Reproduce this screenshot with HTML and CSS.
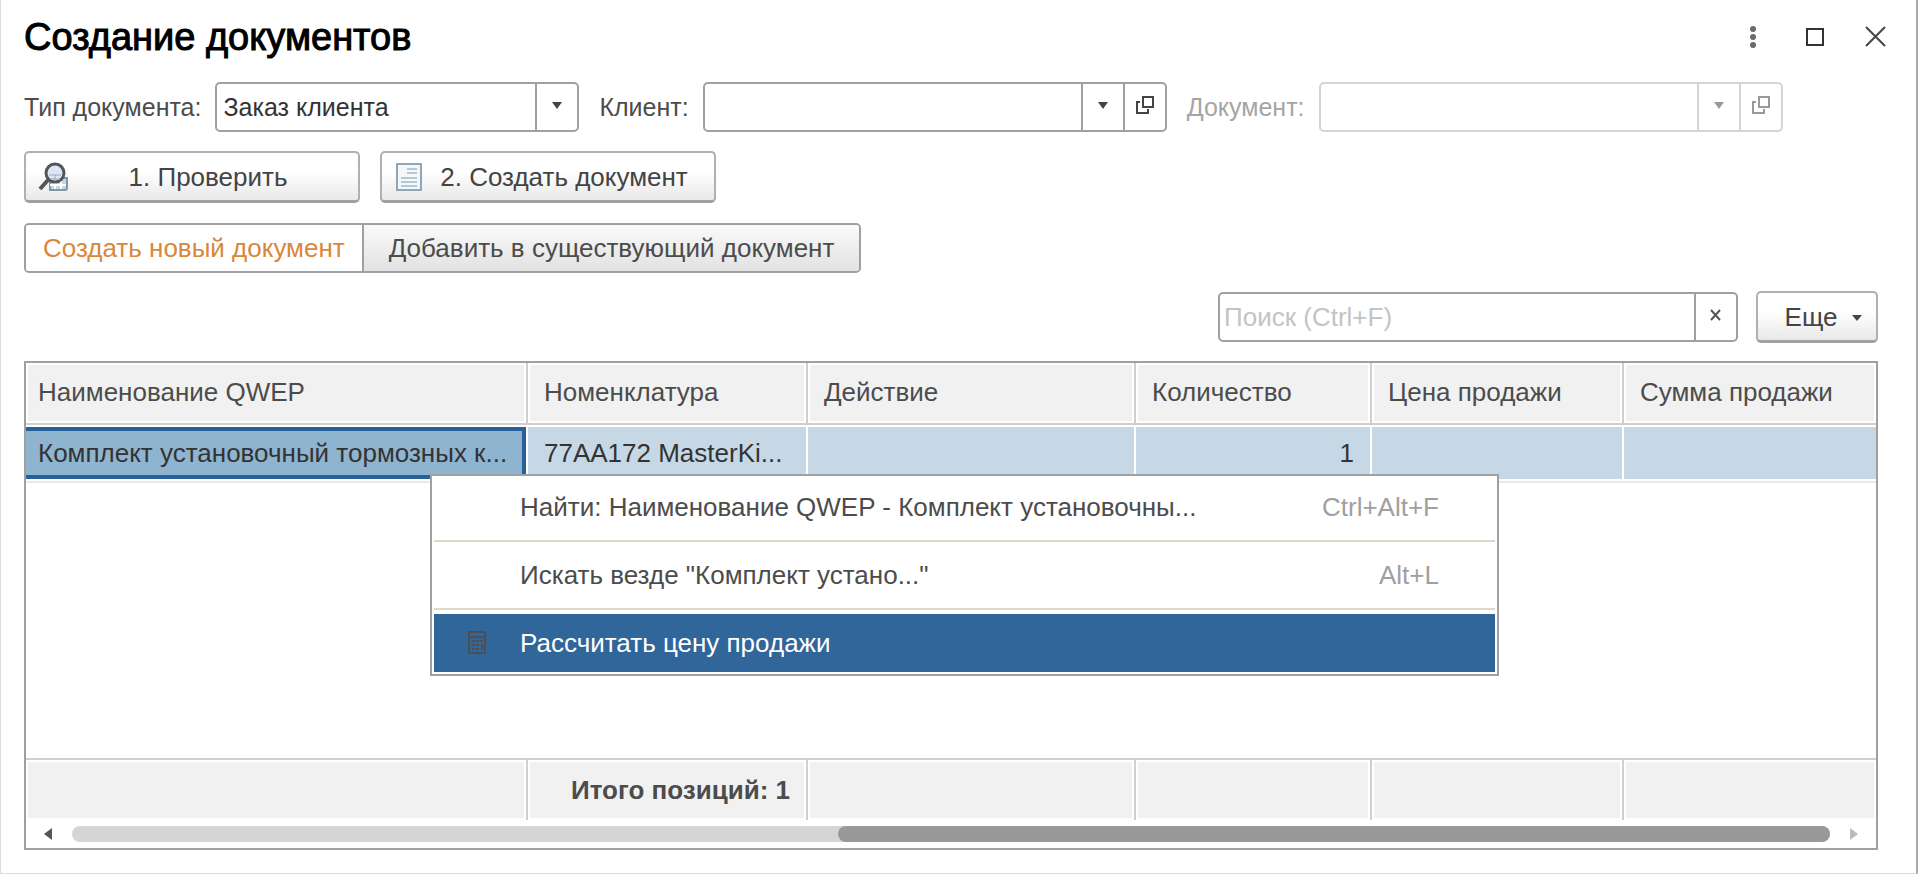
FILE: index.html
```
<!DOCTYPE html>
<html lang="ru">
<head>
<meta charset="utf-8">
<title>Создание документов</title>
<link rel="stylesheet" href="styles.css">
</head>
<body>
<main class="window">
  <header class="titlebar">
    <h1 class="title">Создание документов</h1>
    <div class="window-buttons">
      <button class="win-btn" aria-label="Меню"><svg width="24" height="24" viewBox="0 0 24 24"><g fill="#6a6a6a"><circle cx="13" cy="4" r="3"/><circle cx="13" cy="12" r="3"/><circle cx="13" cy="20" r="3"/></g></svg></button>
      <button class="win-btn" aria-label="Развернуть"><svg width="24" height="24" viewBox="0 0 24 24"><rect x="5" y="4" width="16" height="16" fill="none" stroke="#333" stroke-width="2"/></svg></button>
      <button class="win-btn" aria-label="Закрыть"><svg width="24" height="24" viewBox="0 0 24 24"><path d="M2 2L21 21M21 2L2 21" stroke="#444" stroke-width="2"/></svg></button>
    </div>
  </header>

  <div class="fields">
    <div class="field">
      <label for="type">Тип документа:</label>
      <div class="box box-type">
        <select id="type"><option>Заказ клиента</option></select>
        <span class="box-btn box-arrow"><svg width="10" height="7" viewBox="0 0 10 7"><path d="M0 0H10L5 7Z" fill="#444"/></svg></span>
      </div>
    </div>
    <div class="field">
      <label for="client">Клиент:</label>
      <div class="box box-ref">
        <input id="client" type="text">
        <button class="box-btn" aria-label="Выбрать клиента"><svg width="10" height="7" viewBox="0 0 10 7"><path d="M0 0H10L5 7Z" fill="#444"/></svg></button>
        <button class="box-btn" aria-label="Открыть клиента"><svg width="20" height="20" viewBox="0 0 20 20"><path d="M8 2H18V12H8ZM5 7H2V18H13V14" fill="none" stroke="#444" stroke-width="2"/></svg></button>
      </div>
    </div>
    <div class="field disabled">
      <label for="doc">Документ:</label>
      <div class="box box-ref">
        <input id="doc" type="text" disabled>
        <button class="box-btn" disabled aria-label="Выбрать документ"><svg width="10" height="7" viewBox="0 0 10 7"><path d="M0 0H10L5 7Z" fill="#999"/></svg></button>
        <button class="box-btn" disabled aria-label="Открыть документ"><svg width="20" height="20" viewBox="0 0 20 20"><path d="M8 2H18V12H8ZM5 7H2V18H13V14" fill="none" stroke="#999" stroke-width="2"/></svg></button>
      </div>
    </div>
  </div>

  <div class="commands">
    <button class="btn btn-wide">
      <svg class="btn-icon" width="32" height="32" viewBox="0 0 32 32"><path d="M12 17H29V27Q29 29 27 29H12Z" fill="#c9d6df" stroke="#7f97a8" stroke-width="2"/><path d="M17 19V28M23 19V28M12 24H28" stroke="#fff" stroke-width="2"/><circle cx="17" cy="12" r="9" fill="#dce6f8" stroke="#555" stroke-width="3"/><path d="M11 14H23M12 18H22M17 14V20" stroke="#9aabb9" stroke-width="1"/><path d="M10 19L2 28" stroke="#555" stroke-width="4"/></svg>
      <span class="btn-text">1. Проверить</span>
    </button>
    <button class="btn btn-wide">
      <svg class="btn-icon" width="32" height="32" viewBox="0 0 32 32"><rect x="3" y="3" width="24" height="26" fill="#f5f8fb" stroke="#8fa6b8" stroke-width="2"/><path d="M13 8H23M13 12H23M7 17H23M7 21H23M7 25H23" stroke="#b4c8d6" stroke-width="2"/></svg>
      <span class="btn-text">2. Создать документ</span>
    </button>
  </div>

  <div class="switch">
    <button class="switch-item active">Создать новый документ</button>
    <button class="switch-item">Добавить в существующий документ</button>
  </div>

  <div class="search-row">
    <div class="box box-search">
      <input type="text" placeholder="Поиск (Ctrl+F)" aria-label="Поиск">
      <button class="box-btn" aria-label="Очистить"><svg width="12" height="12" viewBox="0 0 12 12"><path d="M1 1L10 11M10 1L1 11" stroke="#555" stroke-width="2"/></svg></button>
    </div>
    <button class="btn btn-more">Еще <svg width="12" height="8" viewBox="0 0 12 8"><path d="M1 2H11L6 8Z" fill="#444"/></svg></button>
  </div>

  <section class="grid">
    <table>
      <colgroup><col class="c1"><col class="c2"><col class="c3"><col class="c4"><col class="c5"><col class="c6"></colgroup>
      <thead>
        <tr><th>Наименование QWEP</th><th>Номенклатура</th><th>Действие</th><th>Количество</th><th>Цена продажи</th><th>Сумма продажи</th></tr>
      </thead>
      <tbody>
        <tr class="row"><td class="current">Комплект установочный тормозных к...</td><td>77AA172 MasterKi...</td><td></td><td class="num">1</td><td></td><td></td></tr>
        <tr class="empty"><td colspan="6"></td></tr>
      </tbody>
      <tfoot>
        <tr><td></td><td class="num">Итого позиций: 1</td><td></td><td></td><td></td><td></td></tr>
      </tfoot>
    </table>
    <div class="scroll">
      <button class="scroll-btn" aria-label="Влево"><svg width="8" height="12" viewBox="0 0 8 12"><path d="M8 0V12L0 6Z" fill="#555"/></svg></button>
      <div class="track"><div class="thumb"></div></div>
      <button class="scroll-btn" aria-label="Вправо"><svg width="8" height="12" viewBox="0 0 8 12"><path d="M0 0V12L8 6Z" fill="#bbb"/></svg></button>
    </div>
    <div class="menu" role="menu">
      <button class="menu-item" role="menuitem"><span class="menu-icon"></span><span class="menu-text">Найти: Наименование QWEP - Комплект установочны...</span><span class="key">Ctrl+Alt+F</span></button>
      <button class="menu-item" role="menuitem"><span class="menu-icon"></span><span class="menu-text">Искать везде "Комплект устано..."</span><span class="key">Alt+L</span></button>
      <button class="menu-item selected" role="menuitem"><span class="menu-icon"><svg width="20" height="24" viewBox="0 0 20 24"><path d="M2 1H18V22H2Z" fill="none" stroke="#4a4f55" stroke-width="2"/><path d="M2 6H18" stroke="#4a4f55" stroke-width="2"/><path d="M5 10H8M9 10H12M13 10H16M5 14H8M9 14H12M5 18H8M9 18H12" stroke="#4a4f55" stroke-width="2"/><path d="M15 13V19" stroke="#4a4f55" stroke-width="2"/></svg></span><span class="menu-text">Рассчитать цену продажи</span></button>
    </div>
  </section>
</main>
</body>
</html>
```

FILE: styles.css
```
* { box-sizing: border-box; }

body {
  margin: 0;
  background: #fff;
  color: #4c4c4c;
  font: 26px/32px "Liberation Sans", Arial, sans-serif;
}

button, input, select {
  font: inherit;
  color: inherit;
  border: 0;
  margin: 0;
  padding: 0;
  background: none;
}

svg { display: block; flex: none; }

.window {
  display: flex;
  flex-direction: column;
  min-height: 100vh;
  padding: 16px 38px 23px 23px;
  border: solid #dcdcdc;
  border-width: 0 2px 1px 1px;
  border-right-color: #aaa;
}

.titlebar {
  display: flex;
  justify-content: space-between;
  align-items: center;
  height: 42px;
}

.title {
  margin: 0;
  color: #000;
  font-size: 38px;
  font-weight: 400;
  line-height: 42px;
  -webkit-text-stroke: 1px #000;
}

.window-buttons { display: flex; gap: 38px; margin-right: -10px; }
.win-btn { width: 24px; height: 24px; }

.fields { display: flex; gap: 20px; margin-top: 24px; font-size: 25px; }
.field { display: flex; align-items: center; gap: 14px; }

.box {
  position: relative;
  display: flex;
  height: 50px;
  border: 2px solid #a0a0a0;
  border-radius: 5px;
  background: #fff;
  color: #333;
}
.box input, .box select {
  flex: 1;
  min-width: 0;
  padding: 0 6px;
  outline: 0;
  appearance: none;
}
.box-btn {
  display: flex;
  align-items: center;
  justify-content: center;
  width: 42px;
  padding-bottom: 4px;
  border-left: 2px solid #a0a0a0;
}
.box-arrow { pointer-events: none; }
.box-type { width: 364px; }
.box-ref { width: 464px; }
.disabled { color: #a5a5a5; }
.disabled .box, .disabled .box-btn { border-color: #d4d4d4; }

.commands { display: flex; gap: 20px; margin-top: 19px; }

.btn {
  display: flex;
  align-items: center;
  height: 52px;
  border: 2px solid #b0b0b0;
  border-bottom: 3px solid #a0a0a0;
  border-radius: 5px;
  background: linear-gradient(#fff 40%, #e8e8e8);
  color: #444;
}
.btn-wide { width: 336px; padding: 0 12px; }
.btn-text { flex: 1; text-align: center; }

.switch {
  display: flex;
  align-self: flex-start;
  height: 50px;
  margin-top: 20px;
  border: 2px solid #a0a0a0;
  border-radius: 5px;
  overflow: hidden;
}
.switch-item { padding: 0 25px; background: linear-gradient(#fafafa, #e2e2e2); }
.switch-item.active {
  padding: 0 17px;
  border-right: 2px solid #a0a0a0;
  background: #fff;
  color: #d9873a;
}

.search-row {
  display: flex;
  justify-content: flex-end;
  align-items: center;
  gap: 18px;
  margin-top: 18px;
}
.box-search { width: 520px; }
.box-search input { padding: 0 4px; }
.box-search input::placeholder { color: #c4c4c4; opacity: 1; }
.btn-more { width: 122px; justify-content: center; gap: 14px; padding-left: 14px; }

.grid {
  position: relative;
  display: flex;
  flex: 1;
  flex-direction: column;
  margin-top: 18px;
  border: 2px solid #a0a0a0;
}

table {
  flex: 1;
  width: 100%;
  table-layout: fixed;
  border-collapse: separate;
  border-spacing: 0;
}
.c1 { width: 502px; }
.c2 { width: 280px; }
.c3 { width: 328px; }
.c4 { width: 236px; }
.c5 { width: 252px; }

th, td {
  padding: 0 16px;
  overflow: hidden;
  text-align: left;
  white-space: nowrap;
  font-weight: 400;
}
th:first-child, td:first-child { padding-left: 12px; }
.num { text-align: right; }

th {
  height: 62px;
  padding-bottom: 2px;
  border-right: 2px solid #cfcfcf;
  border-bottom: 2px solid #cfcfcf;
  background: #f1f1f1;
  box-shadow: inset 0 0 0 2px #fff;
}
th:last-child, tfoot td:last-child { border-right: 0; }

.row td {
  height: 56px;
  border: solid #fff;
  border-width: 2px 2px 2px 0;
  background: #c6d8e6;
  color: #333;
}
.row td:last-child { border-right: 0; }
.row .current {
  background: #8fb4cf;
  box-shadow: inset 0 4px #2a6099, inset -4px -4px #2a6099;
}

.empty td { border-top: 2px solid #e8e8e8; }

tfoot td {
  height: 62px;
  padding-right: 16px;
  border-top: 2px solid #cfcfcf;
  border-right: 2px solid #cfcfcf;
  background: #f1f1f1;
  box-shadow: inset 0 0 0 2px #fff;
  font-weight: 700;
}

.scroll { display: flex; align-items: center; height: 28px; padding: 0 18px; gap: 20px; }
.scroll-btn { width: 8px; height: 12px; }
.track { flex: 1; height: 16px; border-radius: 8px; background: #d5d5d5; }
.thumb { width: 992px; height: 16px; margin-left: auto; border-radius: 8px; background: #999; }

.menu {
  position: absolute;
  top: 111px;
  left: 404px;
  width: 1069px;
  padding: 2px;
  border: 2px solid #a0a0a0;
  background: #fff;
}
.menu-item {
  display: flex;
  align-items: center;
  width: 100%;
  height: 62px;
  padding: 0 56px 4px 0;
  text-align: left;
}
.menu-item + .menu-item {
  height: 68px;
  padding-bottom: 0;
  border-top: 2px solid #dcdacb;
}
.menu-icon { display: flex; justify-content: center; width: 86px; }
.menu-text { flex: 1; }
.key { color: #a0a0a0; }
.menu .menu-item.selected {
  height: 64px;
  padding-top: 4px;
  background: #30669a;
  color: #fff;
  box-shadow: inset 0 4px #fff;
}
```
